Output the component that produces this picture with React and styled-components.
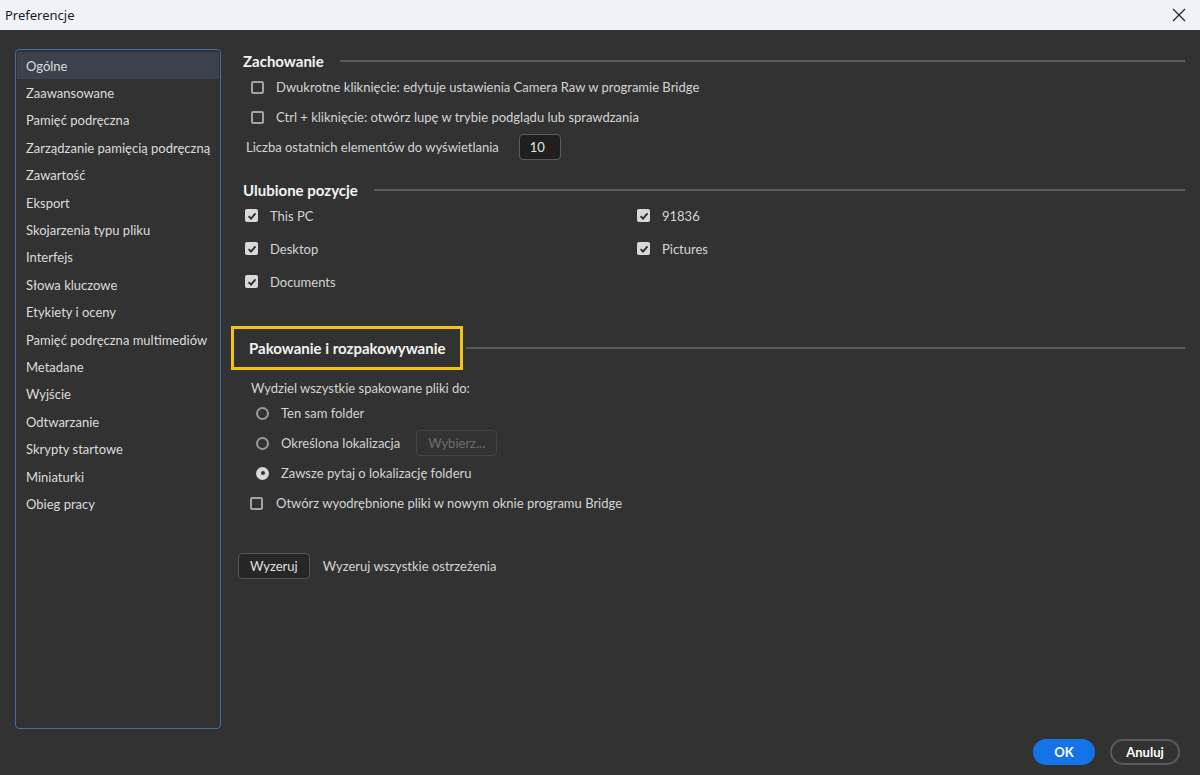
import styled, { createGlobalStyle } from "styled-components";

const GlobalStyle = createGlobalStyle`
  html, body {
    margin: 0;
    padding: 0;
    background: #323232;
  }
  * {
    box-sizing: border-box;
  }
`;

const Window = styled.div`
  width: 1200px;
  height: 775px;
  display: flex;
  flex-direction: column;
  background: #323232;
  font-family: Lato, "Noto Sans", sans-serif;
  font-size: 13px;
  color: #d4d4d4;
  overflow: hidden;
`;

const TitleBar = styled.header`
  height: 30px;
  flex-shrink: 0;
  display: flex;
  align-items: center;
  justify-content: space-between;
  padding: 0 12px 0 5px;
  background: #eff2f7;
  color: #1b1b1b;
  font-family: "Noto Sans", sans-serif;
  font-size: 13px;
`;

const CloseButton = styled.button`
  width: 18px;
  height: 18px;
  padding: 0;
  border: none;
  background: transparent;
  display: flex;
  align-items: center;
  justify-content: center;
`;

const Main = styled.div`
  flex: 1;
  display: flex;
  padding: 19px 15px 0 15px;
  gap: 10px;
  min-height: 0;
`;

const Sidebar = styled.nav`
  width: 206px;
  flex-shrink: 0;
  border: 1px solid #3f6ea8;
  border-radius: 4px;
  padding: 2px 1px;
  display: flex;
  flex-direction: column;
`;

const NavItem = styled.div`
  height: 27.4px;
  flex-shrink: 0;
  display: flex;
  align-items: center;
  padding-left: 9px;
  white-space: nowrap;
  color: #dcdcdc;
  background: ${({ active }) => (active ? "#3b424d" : "transparent")};
`;

const Content = styled.section`
  flex: 1;
  display: flex;
  flex-direction: column;
  padding-top: 1px;
`;

const SectionHead = styled.div`
  display: flex;
  align-items: center;
  gap: ${({ gap }) => gap ?? 16}px;
  height: ${({ h }) => h || 22}px;
  margin-top: ${({ mt }) => mt || 0}px;
  padding-left: ${({ pl }) => pl ?? 12}px;
`;

const Heading = styled.h3`
  margin: 0;
  font-size: 15px;
  font-weight: 700;
  color: #f2f2f2;
  white-space: nowrap;
`;

const Rule = styled.div`
  flex: 1;
  height: 2px;
  background: #5b5b5b;
`;

const Highlight = styled.div`
  height: 44px;
  display: flex;
  align-items: center;
  padding: 0 14px 0 15px;
  border: 3px solid #f4c318;
`;

const Row = styled.div`
  height: ${({ h }) => h || 30}px;
  display: flex;
  align-items: center;
  gap: ${({ gap }) => gap ?? 12}px;
  padding-left: ${({ pl }) => pl || 0}px;
  margin-top: ${({ mt }) => mt || 0}px;
  white-space: nowrap;
`;

const Box = styled.span`
  width: 13px;
  height: 13px;
  flex-shrink: 0;
  border-radius: 2px;
  display: flex;
  align-items: center;
  justify-content: center;
  border: ${({ checked }) => (checked ? "none" : "2px solid #a3a3a3")};
  background: ${({ checked }) => (checked ? "#d8d8d8" : "transparent")};
`;

const Radio = styled.span`
  width: 13px;
  height: 13px;
  flex-shrink: 0;
  border-radius: 50%;
  display: flex;
  align-items: center;
  justify-content: center;
  border: ${({ checked }) => (checked ? "none" : "2px solid #9a9a9a")};
  background: ${({ checked }) => (checked ? "#d8d8d8" : "transparent")};

  &::after {
    content: "";
    width: 4px;
    height: 4px;
    border-radius: 50%;
    background: #323232;
    display: ${({ checked }) => (checked ? "block" : "none")};
  }
`;

const NumberField = styled.div`
  width: 42px;
  height: 26px;
  border: 1px solid #5a5a5a;
  border-radius: 4px;
  background: #1f1f1f;
  display: flex;
  align-items: center;
  padding-left: 10px;
  color: #e6e6e6;
`;

const Grid = styled.div`
  display: grid;
  grid-template-columns: 392px 1fr;
  grid-auto-rows: 33px;
  padding-left: 14px;
`;

const Button = styled.button`
  height: 26px;
  padding: 0 11px;
  border-radius: 4px;
  font-family: inherit;
  font-size: 13px;
  margin-left: ${({ ml }) => ml || 0}px;
  border: 1px solid ${({ disabled }) => (disabled ? "#444" : "#555")};
  background: ${({ disabled }) => (disabled ? "transparent" : "#262626")};
  color: ${({ disabled }) => (disabled ? "#6e6e6e" : "#e0e0e0")};
`;

const Footer = styled.footer`
  height: 46px;
  flex-shrink: 0;
  display: flex;
  justify-content: flex-end;
  gap: 15px;
  padding: 10px 20px 0 0;
`;

const Pill = styled.button`
  height: 26px;
  width: ${({ w }) => w}px;
  border-radius: 13px;
  font-family: inherit;
  font-size: 13px;
  font-weight: 700;
  color: #ffffff;
  border: ${({ primary }) => (primary ? "none" : "2px solid #5a5a5a")};
  background: ${({ primary }) => (primary ? "#1473e6" : "transparent")};
`;

const Check = () => (
  <svg width="10" height="10" viewBox="0 0 10 10">
    <path d="M1.6 5.2 L4 7.6 L8.5 2.4" fill="none" stroke="#2b2b2b" strokeWidth="1.9" />
  </svg>
);

const CheckItem = ({ checked, label, pl, gap }) => (
  <Row pl={pl} gap={gap} h={33}>
    <Box checked={checked}>{checked && <Check />}</Box>
    <span>{label}</span>
  </Row>
);

const navItems = [
  "Ogólne",
  "Zaawansowane",
  "Pamięć podręczna",
  "Zarządzanie pamięcią podręczną",
  "Zawartość",
  "Eksport",
  "Skojarzenia typu pliku",
  "Interfejs",
  "Słowa kluczowe",
  "Etykiety i oceny",
  "Pamięć podręczna multimediów",
  "Metadane",
  "Wyjście",
  "Odtwarzanie",
  "Skrypty startowe",
  "Miniaturki",
  "Obieg pracy",
];

const App = () => {
  return (
    <>
      <GlobalStyle />
      <Window>
        <TitleBar>
          <span>Preferencje</span>
          <CloseButton>
            <svg width="14" height="14" viewBox="0 0 14 14">
              <path d="M1 1 L13 13 M13 1 L1 13" stroke="#222" strokeWidth="1.2" />
            </svg>
          </CloseButton>
        </TitleBar>

        <Main>
          <Sidebar>
            {navItems.map((item, i) => (
              <NavItem key={item} active={i === 0}>
                {item}
              </NavItem>
            ))}
          </Sidebar>

          <Content>
            <SectionHead>
              <Heading>Zachowanie</Heading>
              <Rule />
            </SectionHead>
            <Row pl={20}>
              <Box />
              <span>Dwukrotne kliknięcie: edytuje ustawienia Camera Raw w programie Bridge</span>
            </Row>
            <Row pl={20}>
              <Box />
              <span>Ctrl + kliknięcie: otwórz lupę w trybie podglądu lub sprawdzania</span>
            </Row>
            <Row pl={15} gap={20}>
              <span>Liczba ostatnich elementów do wyświetlania</span>
              <NumberField>10</NumberField>
            </Row>

            <SectionHead h={18} mt={19}>
              <Heading>Ulubione pozycje</Heading>
              <Rule />
            </SectionHead>
            <Grid>
              <CheckItem checked label="This PC" />
              <CheckItem checked label="91836" />
              <CheckItem checked label="Desktop" />
              <CheckItem checked label="Pictures" />
              <CheckItem checked label="Documents" />
            </Grid>

            <SectionHead pl={0} gap={3} h={44} mt={28}>
              <Highlight>
                <Heading>Pakowanie i rozpakowywanie</Heading>
              </Highlight>
              <Rule />
            </SectionHead>
            <Row h={20} mt={8} pl={20}>
              <span>Wydziel wszystkie spakowane pliki do:</span>
            </Row>
            <Row pl={25}>
              <Radio />
              <span>Ten sam folder</span>
            </Row>
            <Row pl={25}>
              <Radio />
              <span>Określona lokalizacja</span>
              <Button disabled ml={4}>Wybierz...</Button>
            </Row>
            <Row pl={25}>
              <Radio checked />
              <span>Zawsze pytaj o lokalizację folderu</span>
            </Row>
            <Row pl={19} gap={13}>
              <Box />
              <span>Otwórz wyodrębnione pliki w nowym oknie programu Bridge</span>
            </Row>

            <Row h={28} mt={34} pl={7} gap={13}>
              <Button>Wyzeruj</Button>
              <span>Wyzeruj wszystkie ostrzeżenia</span>
            </Row>
          </Content>
        </Main>

        <Footer>
          <Pill primary w={62}>OK</Pill>
          <Pill w={70}>Anuluj</Pill>
        </Footer>
      </Window>
    </>
  );
};

export default App;
